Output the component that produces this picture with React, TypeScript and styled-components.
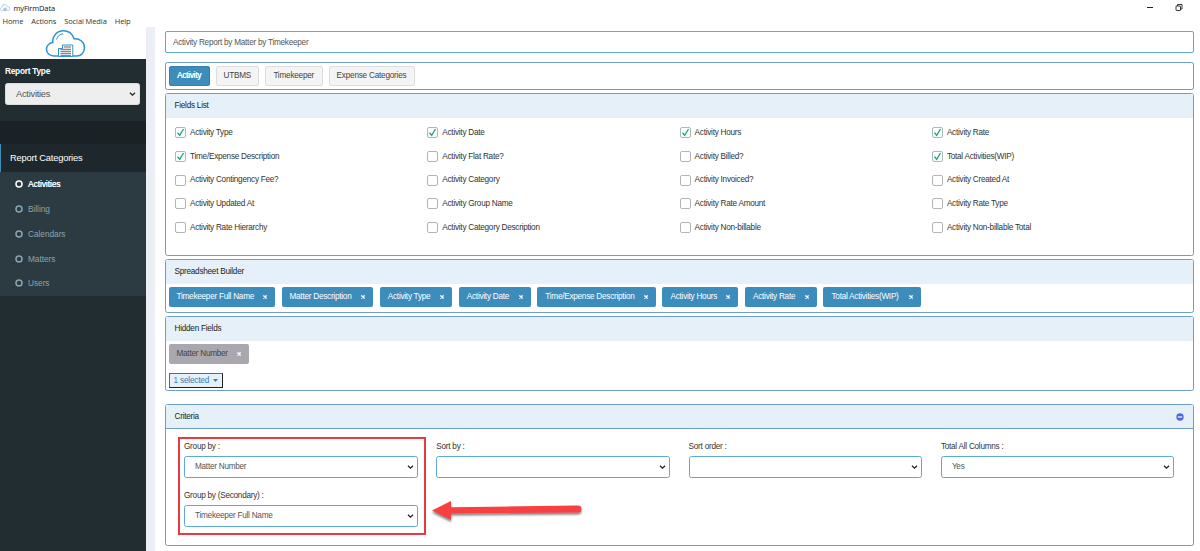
import React from "react";
import styled, { createGlobalStyle } from "styled-components";

const GlobalStyle = createGlobalStyle`
  * { box-sizing: border-box; }
  body {
    margin: 0;
    background: #fff;
    color: #333;
    font-family: "Liberation Sans", Arial, sans-serif;
    font-size: 8.2px;
    letter-spacing: -0.25px;
    line-height: 10px;
    overflow: hidden;
  }
  svg { flex-shrink: 0; }
`;

const Window = styled.div`
  display: flex;
  flex-direction: column;
  width: 1200px;
  height: 551px;
  overflow: hidden;
`;

const TitleBar = styled.header`
  display: flex;
  align-items: center;
  height: 14px;
  padding: 1px 17px 0 0;
  color: #111;
  font: 7.5px/12px "Open Sans", "Noto Sans", sans-serif;
  letter-spacing: -0.15px;
`;

const Title = styled.span`
  flex: 1;
  padding-left: 3.5px;
`;

const WindowControls = styled.div`
  display: flex;
  align-items: center;
  gap: 22px;
`;

const MenuBar = styled.nav`
  display: flex;
  gap: 8px;
  height: 13px;
  padding-left: 2.5px;
  color: #333;
  font: 7.5px/14px "Open Sans", "Noto Sans", sans-serif;
  letter-spacing: -0.1px;
`;

const Body = styled.div`
  display: flex;
  flex: 1;
  min-height: 0;
`;

const Sidebar = styled.aside`
  display: flex;
  flex-direction: column;
  width: 145.5px;
  background: #222d32;
`;

const LogoArea = styled.div`
  height: 32px;
  padding: 2px 0 0 45px;
  background: #fff;
`;

const ReportType = styled.div`
  display: flex;
  flex-direction: column;
  gap: 7px;
  height: 62px;
  padding: 7px 6px 0 5px;
  color: #fff;
  font-weight: bold;
  font-size: 8.3px;
`;

const Band = styled.div`
  height: 23px;
  background: #1a2226;
`;

const CategoryHeader = styled.div`
  height: 28px;
  padding-left: 9px;
  border-left: 1px solid #3c8dbc;
  background: #1e282c;
  color: #fff;
  font-size: 9.3px;
  letter-spacing: -0.18px;
  line-height: 29px;
`;

const CategoryList = styled.ul`
  height: 124px;
  margin: 0;
  padding: 0;
  list-style: none;
  background: #2c3b41;
`;

const Category = styled.li<{ $active?: boolean }>`
  display: flex;
  align-items: center;
  gap: 5px;
  height: 24.75px;
  padding-left: 15px;
  color: ${(p) => (p.$active ? "#fff" : "#8aa4af")};
  font-size: 8.3px;
  letter-spacing: -0.04px;
  text-shadow: ${(p) => (p.$active ? "0.3px 0 #fff" : "none")};
`;

const Gutter = styled.div`
  width: 9.5px;
  background: #ebeef4;
`;

const Main = styled.main`
  display: flex;
  flex-direction: column;
  flex: 1;
  padding: 4px 6px 0 9.5px;
`;

const ReportName = styled.div`
  height: 22px;
  margin-bottom: 9px;
  padding-left: 7.5px;
  border: 1px solid #5aa9d6;
  border-radius: 2px;
  color: #555;
  line-height: 21px;
`;

const Panel = styled.section<{ $height: number; $gap?: number }>`
  height: ${(p) => p.$height}px;
  margin-bottom: ${(p) => p.$gap ?? 3}px;
  border: 1px solid #6e9dcb;
  border-radius: 2.5px;
`;

const PanelHeader = styled.h2<{ $ruled?: boolean }>`
  display: flex;
  align-items: center;
  justify-content: space-between;
  height: 24px;
  margin: 0;
  padding: 0 9px ${(p) => (p.$ruled ? 0 : 1)}px;
  border-bottom: ${(p) => (p.$ruled ? "1px solid #6e9dcb" : "none")};
  background: #e6f0f9;
  color: #222;
  font-size: inherit;
  font-weight: normal;
`;

const Tabs = styled.div`
  display: flex;
  gap: 6px;
  padding: 3px;
`;

const Tab = styled.button<{ $active?: boolean; $width: number }>`
  width: ${(p) => p.$width}px;
  height: 20px;
  padding: 0;
  border: 1px solid ${(p) => (p.$active ? "#367fa9" : "#ddd")};
  border-radius: 2px;
  background: ${(p) => (p.$active ? "#3c8dbc" : "#f4f4f4")};
  color: ${(p) => (p.$active ? "#fff" : "#444")};
  font: inherit;
  letter-spacing: -0.22px;
  text-shadow: ${(p) => (p.$active ? "0.3px 0 #fff" : "none")};
`;

const FieldGrid = styled.div`
  display: grid;
  grid-template-columns: repeat(4, 252.3px);
  grid-auto-rows: 23.7px;
  padding: 3px 0 0 9.5px;
`;

const Field = styled.label`
  display: flex;
  align-items: center;
  gap: 4px;
`;

const Box = styled.span<{ $checked: boolean }>`
  display: flex;
  width: 11px;
  height: 11px;
  border: 1px solid ${(p) => (p.$checked ? "#a5bdb4" : "#b4b4b4")};
  border-radius: 2px;
`;

const Chips = styled.div`
  display: flex;
  gap: 6.5px;
  padding: 3px 3px 0;
`;

const Chip = styled.div<{ $width: number; $muted?: boolean }>`
  display: flex;
  align-items: center;
  justify-content: space-between;
  width: ${(p) => p.$width}px;
  height: 20px;
  padding: 0 8px;
  border-radius: 2px;
  background: ${(p) => (p.$muted ? "#aaa7ae" : "#3c8dbc")};
  color: ${(p) => (p.$muted ? "#444" : "#fff")};
  white-space: nowrap;
`;

const SelectedButton = styled.button`
  display: flex;
  align-items: center;
  gap: 4px;
  width: 54px;
  height: 15px;
  margin: 9px 0 0 3px;
  padding: 0 4px;
  border: 1.5px solid;
  border-color: #666 #222 #222 #666;
  background: #e6f0f9;
  color: #3c7cb4;
  font: inherit;
  letter-spacing: -0.17px;
  white-space: nowrap;
`;

const CriteriaGrid = styled.div`
  position: relative;
  display: grid;
  grid-template-columns: repeat(4, 233.5px);
  grid-auto-rows: 48.5px;
  column-gap: 18.8px;
  padding: 13px 0 0 18.5px;
`;

const Criterion = styled.div`
  display: flex;
  flex-direction: column;
  gap: 4px;
`;

const SelectBox = styled.div<{ $grey?: boolean }>`
  display: flex;
  align-items: center;
  justify-content: space-between;
  height: 22px;
  padding: 0 3px 0 10px;
  border: 1px solid ${(p) => (p.$grey ? "#ddd" : "#5aa9d6")};
  border-radius: 2.5px;
  background: ${(p) => (p.$grey ? "#eee" : "#fff")};
  color: #555;
  font-size: ${(p) => (p.$grey ? 9.3 : 8.2)}px;
  font-weight: normal;
`;

const Highlight = styled.div`
  position: absolute;
  top: 8px;
  left: 12px;
  width: 248px;
  height: 98px;
  border: 2px solid #e8393e;
`;

const Arrow = styled.svg`
  position: absolute;
  top: 68px;
  left: 263px;
`;

const CloudLogo = ({ width }: { width: number }) => (
  <svg width={width} height={width * 0.7} viewBox="0 0 41 28.700" fill="none">
    <path
      d="M13 27H9C4.500 27 1.500 24 1.500 20.300c0-3.500 2.600-6.300 6.300-6.800C7.300 6.800 12 1.800 18.300 1.800c5 0 9 3 10.700 7.900 6-.4 10.500 3.500 10.500 8.900 0 5-3.300 8.400-7.700 8.400H28"
      stroke="#2f93d1"
      strokeWidth="1.500"
    />
    <path d="M11.500 10.500c.9-3.300 3.300-5.400 6.800-5.700" stroke="#2f93d1" strokeWidth="1" />
    <path d="M17.500 16h10.300v11.500H13.500V19.500h4z" fill="#fff" stroke="#2f93d1" strokeWidth="1" />
    <path d="M19 18h7M15.500 20.300h10.500M15.500 22.300h10.500M15.500 24.300h10.500M15.500 26.300h10.500" stroke="#666" strokeWidth="1" />
  </svg>
);

const Chevron = () => (
  <svg width="7" height="6" viewBox="0 0 7 6" fill="none">
    <path d="M1 1.700l2.500 2.500L6 1.700" stroke="#222" strokeWidth="1.300" />
  </svg>
);

const Remove = () => (
  <svg width="4" height="4" viewBox="0 0 4 4">
    <path d="M.4.400l3.200 3.200M3.600.400L.4 3.600" stroke="#fff" strokeWidth="1.300" />
  </svg>
);

const Ring = () => (
  <svg width="8" height="8" viewBox="0 0 8 8" fill="none">
    <circle cx="4" cy="4" r="3" stroke="currentColor" strokeWidth="1.500" />
  </svg>
);

const categories = ["Activities", "Billing", "Calendars", "Matters", "Users"];

const tabs: [string, number][] = [
  ["Activity", 41],
  ["UTBMS", 43.5],
  ["Timekeeper", 57.5],
  ["Expense Categories", 86],
];

const fields = [
  "Activity Type", "Activity Date", "Activity Hours", "Activity Rate",
  "Time/Expense Description", "Activity Flat Rate?", "Activity Billed?", "Total Activities(WIP)",
  "Activity Contingency Fee?", "Activity Category", "Activity Invoiced?", "Activity Created At",
  "Activity Updated At", "Activity Group Name", "Activity Rate Amount", "Activity Rate Type",
  "Activity Rate Hierarchy", "Activity Category Description", "Activity Non-billable", "Activity Non-billable Total",
];

const checkedFields = new Set([
  "Activity Type", "Activity Date", "Activity Hours", "Activity Rate",
  "Time/Expense Description", "Total Activities(WIP)",
]);

const columns: [string, number][] = [
  ["Timekeeper Full Name", 106.5],
  ["Matter Description", 91.8],
  ["Activity Type", 72.5],
  ["Activity Date", 72],
  ["Time/Expense Description", 118.7],
  ["Activity Hours", 76],
  ["Activity Rate", 72],
  ["Total Activities(WIP)", 98],
];

const criteria = [
  ["Group by :", "Matter Number"],
  ["Sort by :", ""],
  ["Sort order :", ""],
  ["Total All Columns :", "Yes"],
  ["Group by (Secondary) :", "Timekeeper Full Name"],
];

export default function App() {
  return (
    <Window>
      <GlobalStyle />
      <TitleBar>
        <CloudLogo width={10} />
        <Title>myFirmData</Title>
        <WindowControls>
          <svg width="6" height="8" viewBox="0 0 6 8">
            <path d="M0 3.500h6" stroke="#222" />
          </svg>
          <svg width="8" height="8" viewBox="0 0 8 8" fill="none" stroke="#222" strokeWidth=".9">
            <rect x="1" y="2" width="4.500" height="4.500" rx=".5" />
            <path d="M2.500 2V.5H7V5H5.500" />
          </svg>
        </WindowControls>
      </TitleBar>
      <MenuBar>
        <span>Home</span>
        <span>Actions</span>
        <span>Social Media</span>
        <span>Help</span>
      </MenuBar>
      <Body>
        <Sidebar>
          <LogoArea>
            <CloudLogo width={41} />
          </LogoArea>
          <ReportType>
            Report Type
            <SelectBox $grey>
              Activities
              <Chevron />
            </SelectBox>
          </ReportType>
          <Band />
          <CategoryHeader>Report Categories</CategoryHeader>
          <CategoryList>
            {categories.map((name, i) => (
              <Category key={name} $active={i === 0}>
                <Ring />
                {name}
              </Category>
            ))}
          </CategoryList>
        </Sidebar>
        <Gutter />
        <Main>
          <ReportName>Activity Report by Matter by Timekeeper</ReportName>
          <Panel $height={28}>
            <Tabs>
              {tabs.map(([name, width], i) => (
                <Tab key={name} $width={width} $active={i === 0}>
                  {name}
                </Tab>
              ))}
            </Tabs>
          </Panel>
          <Panel $height={163}>
            <PanelHeader>Fields List</PanelHeader>
            <FieldGrid>
              {fields.map((name) => (
                <Field key={name}>
                  <Box $checked={checkedFields.has(name)}>
                    {checkedFields.has(name) && (
                      <svg width="9" height="9" viewBox="0 0 9 9" fill="none">
                        <path d="M1.500 4.800l2.200 2.500L7.500 1" stroke="#1da37c" strokeWidth="1.300" />
                      </svg>
                    )}
                  </Box>
                  {name}
                </Field>
              ))}
            </FieldGrid>
          </Panel>
          <Panel $height={54}>
            <PanelHeader>Spreadsheet Builder</PanelHeader>
            <Chips>
              {columns.map(([name, width]) => (
                <Chip key={name} $width={width}>
                  {name}
                  <Remove />
                </Chip>
              ))}
            </Chips>
          </Panel>
          <Panel $height={75} $gap={13}>
            <PanelHeader>Hidden Fields</PanelHeader>
            <Chips>
              <Chip $width={80.5} $muted>
                Matter Number
                <Remove />
              </Chip>
            </Chips>
            <SelectedButton>
              1 selected
              <svg width="5" height="3" viewBox="0 0 5 3">
                <path d="M0 0h5L2.500 3z" fill="#3c7cb4" />
              </svg>
            </SelectedButton>
          </Panel>
          <Panel $height={142} $gap={0}>
            <PanelHeader $ruled>
              Criteria
              <svg width="8" height="8" viewBox="0 0 8 8">
                <circle cx="4" cy="4" r="3.700" fill="#4f67e0" />
                <path d="M1.800 4h4.400" stroke="#fff" strokeWidth="1.200" />
              </svg>
            </PanelHeader>
            <CriteriaGrid>
              {criteria.map(([label, value]) => (
                <Criterion key={label}>
                  {label}
                  <SelectBox>
                    <span>{value}</span>
                    <Chevron />
                  </SelectBox>
                </Criterion>
              ))}
              <Highlight />
              <Arrow width="156" height="30" viewBox="0 0 156 30">
                <defs>
                  <filter id="shadow" x="-5%" y="-30%" width="110%" height="180%">
                    <feDropShadow dx="0" dy="2" stdDeviation="1.300" floodColor="#000" floodOpacity=".5" />
                  </filter>
                </defs>
                <path
                  d="M3 13.500L22 4v6.300l127-1.800a3.500 3.500 0 0 1 0 7L22 16.500V23z"
                  fill="#f63f42"
                  filter="url(#shadow)"
                />
              </Arrow>
            </CriteriaGrid>
          </Panel>
        </Main>
      </Body>
    </Window>
  );
}
